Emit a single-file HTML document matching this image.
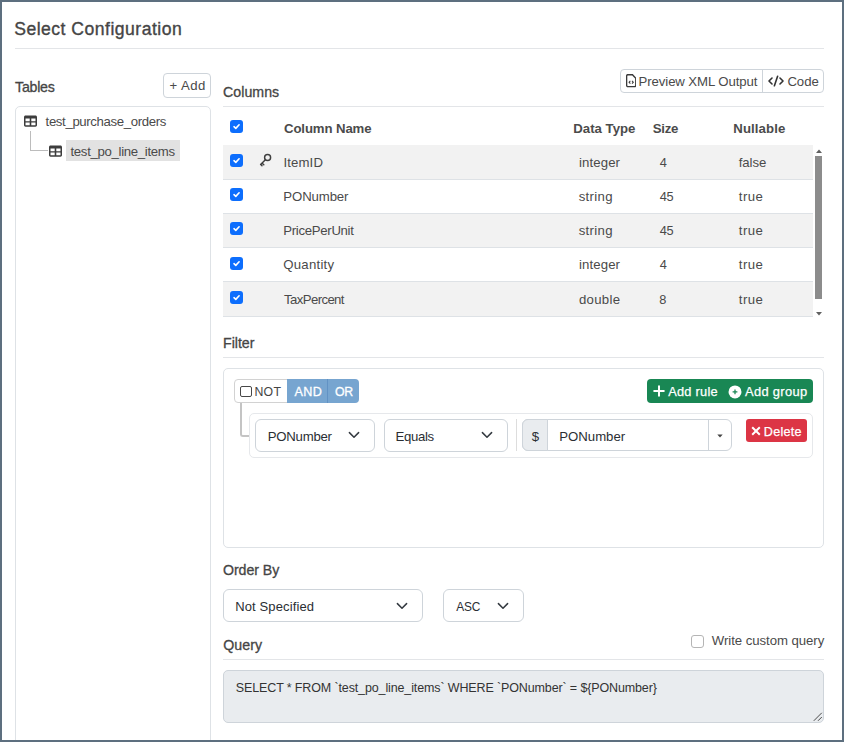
<!DOCTYPE html>
<html lang="en">
<head>
<meta charset="utf-8">
<title>Select Configuration</title>
<style>
*{box-sizing:border-box;margin:0;padding:0}
html,body{width:844px;height:742px;overflow:hidden;background:#fff}
body{font-family:"Liberation Sans",sans-serif;color:#4a4a4a;font-size:12.5px;position:relative}
.frame{position:absolute;left:0;top:0;width:844px;height:742px;border:2px solid #5d6f7f;pointer-events:none;z-index:50}
.abs{position:absolute;white-space:nowrap}
.t{position:absolute;white-space:nowrap;line-height:16px}
.hr{position:absolute;height:1px;background:#e3e5e8}
.lbl{font-weight:700;color:#4b4b4b}
.sec{font-size:14.2px;color:#454545;-webkit-text-stroke:.3px #454545}
.box{position:absolute;border:1px solid #dee2e6;border-radius:5px;background:#fff}
.btn{position:absolute;border:1px solid #ced4da;border-radius:4px;background:#fff}
.sel{position:absolute;border:1px solid #ced4da;border-radius:6px;background:#fff;height:33px}
.cb{position:absolute;width:13px;height:13px;border-radius:3px;background:#0d6efd}
.cb svg{position:absolute;left:0;top:0}
.row{position:absolute;left:223px;width:590px;border-bottom:1px solid #dee2e6}
.row.odd{background:#f2f2f2}
svg{display:block}
</style>
</head>
<body>

<!-- Title -->
<h1 class="t" style="left:14.2px;top:17px;font-size:17.6px;line-height:24px;font-weight:400;color:#454545;-webkit-text-stroke:0.35px #454545;letter-spacing:0.48px">Select Configuration</h1>
<div class="hr" style="left:15px;top:48px;width:809px"></div>

<!-- Tables panel -->
<div class="t sec" style="left:15.1px;top:79px;letter-spacing:-0.26px">Tables</div>
<div class="btn" style="left:163px;top:73px;width:48px;height:25px"></div>
<div class="t" style="left:169.4px;top:78px;font-size:13.2px;letter-spacing:0.48px">+ Add</div>

<div class="box" style="left:15px;top:106px;width:196px;height:660px"></div>


<!-- Tree -->
<svg class="abs" style="left:24px;top:115px" width="13" height="12" viewBox="0 0 13 12"><path fill="#3d3d3d" fill-rule="evenodd" d="M1.6.4h9.8c.9 0 1.6.7 1.6 1.6v8.1c0 .9-.7 1.6-1.6 1.6H1.6C.7 11.7 0 11 0 10.1V2C0 1.1.7.4 1.6.4zM1.5 3.5v2.8h4.2V3.5zM7.3 3.5v2.8h4.2V3.5zM1.5 7.6v2.7h4.2V7.6zM7.3 7.6v2.7h4.2V7.6z"/></svg>
<div class="t" style="left:45.6px;top:114px;font-size:13.2px;letter-spacing:-0.36px">test_purchase_orders</div>
<div class="abs" style="left:30px;top:131px;width:18px;height:20px;border-left:1px solid #bcbcbc;border-bottom:1px solid #bcbcbc"></div>
<svg class="abs" style="left:49px;top:145px" width="13" height="12" viewBox="0 0 13 12"><path fill="#3d3d3d" fill-rule="evenodd" d="M1.6.4h9.8c.9 0 1.6.7 1.6 1.6v8.1c0 .9-.7 1.6-1.6 1.6H1.6C.7 11.7 0 11 0 10.1V2C0 1.1.7.4 1.6.4zM1.5 3.5v2.8h4.2V3.5zM7.3 3.5v2.8h4.2V3.5zM1.5 7.6v2.7h4.2V7.6zM7.3 7.6v2.7h4.2V7.6z"/></svg>
<div class="abs" style="left:66px;top:140px;width:114px;height:21px;background:#e2e2e2"></div>
<div class="t" style="left:70.5px;top:144px;font-size:13.2px;letter-spacing:-0.32px">test_po_line_items</div>

<!-- Columns header -->
<div class="t sec" style="left:223.1px;top:84px;letter-spacing:0.01px">Columns</div>
<div class="btn" style="left:620px;top:69px;width:204px;height:24px"></div>
<div class="abs" style="left:762px;top:69px;width:1px;height:24px;background:#ced4da"></div>
<svg class="abs" style="left:625.7px;top:74.4px" width="10.4" height="13.3" viewBox="0 0 10 12" preserveAspectRatio="none"><path fill="none" stroke="#3a3a3a" stroke-width="1.3" d="M1.8.6h4.4l3.2 3.2v6.4c0 .7-.5 1.2-1.2 1.2H1.8c-.7 0-1.2-.5-1.2-1.2V1.8C.6 1.1 1.1.6 1.8.6z"/><path fill="none" stroke="#3a3a3a" stroke-width="1" d="M4.2 6.2 3 7.4l1.2 1.2M5.8 6.2 7 7.4 5.8 8.6"/></svg>
<div class="t" style="left:638.6px;top:74px;font-size:13.2px;letter-spacing:-0.1px">Preview XML Output</div>
<svg class="abs" style="left:768px;top:75px" width="16" height="12" viewBox="0 0 16 12"><path fill="none" stroke="#333" stroke-width="1.6" stroke-linecap="round" stroke-linejoin="round" d="M4 3 1 6l3 3M12 3l3 3-3 3M9.6 1.2 6.4 10.8"/></svg>
<div class="t" style="left:787.4px;top:74px;font-size:13.2px;letter-spacing:-0.04px">Code</div>
<div class="hr" style="left:223px;top:106px;width:601px"></div>


<!-- Columns table -->
<div class="cb" style="left:230px;top:120px"><svg width="13" height="13" viewBox="0 0 13 13"><path fill="none" stroke="#fff" stroke-width="1.6" stroke-linecap="round" stroke-linejoin="round" d="M4 6.7 5.8 8.4 9.1 4.8"/></svg></div>
<div class="t lbl" style="left:284px;top:121px;font-size:13.2px;letter-spacing:-0.11px">Column Name</div>
<div class="t lbl" style="left:573.3px;top:121px;font-size:13.2px;letter-spacing:0.01px">Data Type</div>
<div class="t lbl" style="left:652.8px;top:121px;font-size:13.2px;letter-spacing:-0.25px">Size</div>
<div class="t lbl" style="left:733.3px;top:121px;font-size:13.2px;letter-spacing:0.1px">Nullable</div>
<div class="row odd" style="top:145px;height:35px"></div>
<div class="cb" style="left:230px;top:154px"><svg width="13" height="13" viewBox="0 0 13 13"><path fill="none" stroke="#fff" stroke-width="1.6" stroke-linecap="round" stroke-linejoin="round" d="M4 6.7 5.8 8.4 9.1 4.8"/></svg></div>
<svg class="abs" style="left:259px;top:153px" width="13" height="14" viewBox="0 0 13 14"><circle cx="8.6" cy="4.4" r="3" fill="none" stroke="#3f3f3f" stroke-width="1.45"/><path fill="none" stroke="#3f3f3f" stroke-width="1.45" stroke-linecap="round" d="M6.4 6.8 1.6 11.6M3.2 10.2l1.6 1.6M1.8 11.6l1.2 1.2"/></svg>
<div class="t" style="left:283.4px;top:155px;font-size:13.2px;letter-spacing:0.14px">ItemID</div><div class="t" style="left:578.9px;top:155px;font-size:13.2px;letter-spacing:0.13px">integer</div><div class="t" style="left:659.7px;top:155px;font-size:12.8px">4</div><div class="t" style="left:738.8px;top:155px;font-size:13.2px;letter-spacing:-0.1px">false</div>
<div class="row" style="top:180px;height:34px"></div>
<div class="cb" style="left:230px;top:188px"><svg width="13" height="13" viewBox="0 0 13 13"><path fill="none" stroke="#fff" stroke-width="1.6" stroke-linecap="round" stroke-linejoin="round" d="M4 6.7 5.8 8.4 9.1 4.8"/></svg></div>
<div class="t" style="left:283.3px;top:189px;font-size:13.2px;letter-spacing:-0.11px">PONumber</div><div class="t" style="left:578.7px;top:189px;font-size:13.2px;letter-spacing:0.32px">string</div><div class="t" style="left:659.7px;top:189px;font-size:12.8px;letter-spacing:-0.18px">45</div><div class="t" style="left:738.8px;top:189px;font-size:13.2px;letter-spacing:0.43px">true</div>
<div class="row odd" style="top:214px;height:34px"></div>
<div class="cb" style="left:230px;top:222px"><svg width="13" height="13" viewBox="0 0 13 13"><path fill="none" stroke="#fff" stroke-width="1.6" stroke-linecap="round" stroke-linejoin="round" d="M4 6.7 5.8 8.4 9.1 4.8"/></svg></div>
<div class="t" style="left:283.3px;top:223px;font-size:13.2px;letter-spacing:-0.31px">PricePerUnit</div><div class="t" style="left:578.7px;top:223px;font-size:13.2px;letter-spacing:0.32px">string</div><div class="t" style="left:659.7px;top:223px;font-size:12.8px;letter-spacing:-0.18px">45</div><div class="t" style="left:738.8px;top:223px;font-size:13.2px;letter-spacing:0.43px">true</div>
<div class="row" style="top:248px;height:34px"></div>
<div class="cb" style="left:230px;top:257px"><svg width="13" height="13" viewBox="0 0 13 13"><path fill="none" stroke="#fff" stroke-width="1.6" stroke-linecap="round" stroke-linejoin="round" d="M4 6.7 5.8 8.4 9.1 4.8"/></svg></div>
<div class="t" style="left:283.3px;top:257px;font-size:13.2px;letter-spacing:0.24px">Quantity</div><div class="t" style="left:578.9px;top:257px;font-size:13.2px;letter-spacing:0.13px">integer</div><div class="t" style="left:659.7px;top:257px;font-size:12.8px">4</div><div class="t" style="left:738.8px;top:257px;font-size:13.2px;letter-spacing:0.43px">true</div>
<div class="row odd" style="top:282px;height:35px"></div>
<div class="cb" style="left:230px;top:291px"><svg width="13" height="13" viewBox="0 0 13 13"><path fill="none" stroke="#fff" stroke-width="1.6" stroke-linecap="round" stroke-linejoin="round" d="M4 6.7 5.8 8.4 9.1 4.8"/></svg></div>
<div class="t" style="left:284.1px;top:292px;font-size:13.2px;letter-spacing:-0.62px">TaxPercent</div><div class="t" style="left:579px;top:292px;font-size:13.2px;letter-spacing:0.28px">double</div><div class="t" style="left:659.3px;top:292px;font-size:12.8px">8</div><div class="t" style="left:738.8px;top:292px;font-size:13.2px;letter-spacing:0.43px">true</div>

<!-- scrollbar -->
<svg class="abs" style="left:815px;top:149px" width="8" height="5" viewBox="0 0 8 5"><path fill="#606060" d="M4 .6 7 4H1z"/></svg>
<div class="abs" style="left:815px;top:156px;width:7px;height:143px;background:#8c8c8c"></div>
<svg class="abs" style="left:815px;top:311px" width="8" height="5" viewBox="0 0 8 5"><path fill="#606060" d="M1 1h6L4 4.4z"/></svg>


<!-- Filter -->
<div class="t sec" style="left:223.1px;top:335px;letter-spacing:-0.04px">Filter</div>
<div class="hr" style="left:223px;top:357px;width:601px"></div>
<div class="box" style="left:223px;top:368px;width:601px;height:180px"></div>

<div class="abs" style="left:240px;top:402px;width:10px;height:35px;border-left:2px solid #c4c4c4;border-bottom:2px solid #c4c4c4;border-bottom-left-radius:3px"></div>
<div class="abs" style="left:234px;top:379px;width:54px;height:24px;background:#fff;border:1px solid #d2d2d2;border-radius:4px 0 0 4px"></div>
<div class="abs" style="left:240px;top:385.5px;width:11.5px;height:11px;border:1.5px solid #484848;border-radius:2px;background:#fff"></div>
<div class="t" style="left:254.5px;top:384px;font-size:12.3px;color:#444;letter-spacing:0.23px">NOT</div>
<div class="abs" style="left:287px;top:379px;width:41px;height:24px;background:#77a5d0;border-right:1px solid #6292c4"></div>
<div class="t" style="left:294.5px;top:384px;font-size:12.6px;color:#fff;-webkit-text-stroke:.3px #fff;letter-spacing:0.39px">AND</div>
<div class="abs" style="left:328px;top:379px;width:31px;height:24px;background:#77a5d0;border-radius:0 4px 4px 0"></div>
<div class="t" style="left:335px;top:384px;font-size:12.3px;color:#fff;-webkit-text-stroke:.3px #fff;letter-spacing:-0.26px">OR</div>

<div class="abs" style="left:647px;top:379px;width:166px;height:24px;background:#198754;border-radius:4px"></div>
<svg class="abs" style="left:653px;top:385px" width="12" height="12" viewBox="0 0 12 12"><path fill="none" stroke="#fff" stroke-width="2" stroke-linecap="round" d="M6 1.2v9.6M1.2 6h9.6"/></svg>
<div class="t" style="left:668.2px;top:384px;font-size:12.8px;color:#fff;-webkit-text-stroke:.25px #fff;letter-spacing:0.26px">Add rule</div>
<svg class="abs" style="left:728px;top:384.6px" width="14" height="14" viewBox="0 0 14 14"><circle cx="7" cy="6.9" r="6.5" fill="#fff"/><path fill="none" stroke="#198754" stroke-width="1.25" d="M7 4.5v4.8M4.6 6.9h4.8"/></svg>
<div class="t" style="left:745px;top:384px;font-size:12.9px;color:#fff;-webkit-text-stroke:.25px #fff;letter-spacing:0.32px">Add group</div>

<div class="box" style="left:249px;top:413px;width:564px;height:45px;border-color:#e6e8eb"></div>
<div class="sel" style="left:255px;top:419px;width:120px"></div>
<div class="t" style="left:267.7px;top:429px;font-size:13.2px;letter-spacing:-0.24px;color:#2a2e33">PONumber</div>
<svg class="abs" style="left:348px;top:431px" width="12" height="8" viewBox="0 0 12 8"><path fill="none" stroke="#343a40" stroke-width="1.5" stroke-linecap="round" stroke-linejoin="round" d="M1.4 1.6 6 6.2l4.6-4.6"/></svg>
<div class="sel" style="left:384px;top:419px;width:124px"></div>
<div class="t" style="left:395.6px;top:429px;font-size:13.2px;letter-spacing:-0.36px;color:#2a2e33">Equals</div>
<svg class="abs" style="left:481px;top:431px" width="12" height="8" viewBox="0 0 12 8"><path fill="none" stroke="#343a40" stroke-width="1.5" stroke-linecap="round" stroke-linejoin="round" d="M1.4 1.6 6 6.2l4.6-4.6"/></svg>
<div class="abs" style="left:516px;top:419px;width:1px;height:32px;background:#ddd"></div>

<div class="abs" style="left:522px;top:419px;width:210px;height:32px;border:1px solid #ced4da;border-radius:6px;background:#fff"></div>
<div class="abs" style="left:522px;top:419px;width:26px;height:32px;border:1px solid #ced4da;border-radius:6px 0 0 6px;background:#e9ecef"></div>
<div class="t" style="left:531.8px;top:429px;font-size:13.2px;color:#2a2e33">$</div>
<div class="t" style="left:559.3px;top:429px;font-size:13.2px;letter-spacing:-0.02px;color:#2a2e33">PONumber</div>
<div class="abs" style="left:708px;top:420px;width:1px;height:30px;background:#ced4da"></div>
<svg class="abs" style="left:717px;top:434px" width="6" height="4" viewBox="0 0 6 4"><path fill="#444" d="M.3.4h5.4L3 3.4z"/></svg>

<div class="abs" style="left:746px;top:419px;width:61px;height:23px;background:#dc3545;border-radius:3px"></div>
<svg class="abs" style="left:751px;top:426px" width="10" height="10" viewBox="0 0 10 10"><path fill="none" stroke="#fff" stroke-width="2" d="M1.2 1.2l7.6 7.6M8.8 1.2 1.2 8.8"/></svg>
<div class="t" style="left:763.8px;top:424px;font-size:12.6px;color:#fff;-webkit-text-stroke:.25px #fff;letter-spacing:0.26px">Delete</div>

<!-- Order By -->
<div class="t sec" style="left:222.9px;top:562px;letter-spacing:-0.05px">Order By</div>
<div class="sel" style="left:223px;top:589px;width:200px"></div>
<div class="t" style="left:235.2px;top:599px;font-size:13.0px;letter-spacing:0.13px;color:#2a2e33">Not Specified</div>
<svg class="abs" style="left:396px;top:602px" width="12" height="8" viewBox="0 0 12 8"><path fill="none" stroke="#343a40" stroke-width="1.5" stroke-linecap="round" stroke-linejoin="round" d="M1.4 1.6 6 6.2l4.6-4.6"/></svg>
<div class="sel" style="left:443px;top:589px;width:81px"></div>
<div class="t" style="left:456.2px;top:599px;font-size:11.9px;letter-spacing:-0.21px;color:#2a2e33">ASC</div>
<svg class="abs" style="left:497px;top:602px" width="12" height="8" viewBox="0 0 12 8"><path fill="none" stroke="#343a40" stroke-width="1.5" stroke-linecap="round" stroke-linejoin="round" d="M1.4 1.6 6 6.2l4.6-4.6"/></svg>

<!-- Query -->
<div class="t sec" style="left:223.2px;top:637px;letter-spacing:0.07px">Query</div>
<div class="abs" style="left:691px;top:635px;width:13px;height:13px;border:1px solid #b5b5b5;border-radius:3px;background:#fff"></div>
<div class="t" style="left:711.8px;top:633px;font-size:13.2px;letter-spacing:-0.05px">Write custom query</div>
<div class="hr" style="left:223px;top:659px;width:601px"></div>
<div class="abs" style="left:223px;top:670px;width:601px;height:53px;border:1px solid #ced4da;border-radius:5px;background:#e9ecef"></div>
<div class="t" style="left:235.8px;top:680px;font-size:12.5px;color:#333;letter-spacing:-0.13px">SELECT * FROM `test_po_line_items` WHERE `PONumber` = ${PONumber}</div>
<svg class="abs" style="left:813px;top:712px" width="10" height="10" viewBox="0 0 10 10"><path fill="none" stroke="#4a4a4a" stroke-width="1" d="M.8 8.8 8.8.8M5 8.8l3.8-3.8"/></svg>

<div class="frame"></div>
</body>
</html>
